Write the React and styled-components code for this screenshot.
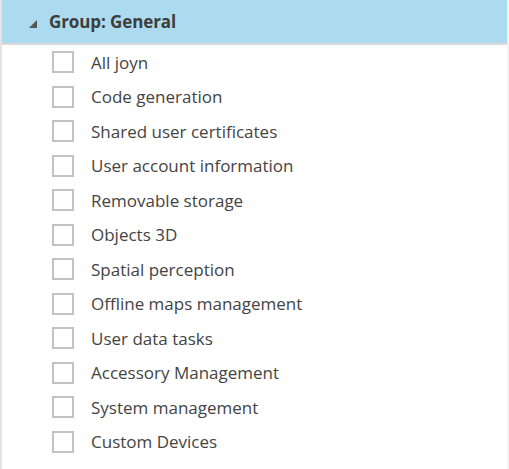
import React from "react";
import styled, { createGlobalStyle } from "styled-components";

const Global = createGlobalStyle`
  html, body { margin: 0; padding: 0; background: #fff; }
  body { font-family: "Open Sans", "Noto Sans", sans-serif; }
`;

const Panel = styled.div`
  width: 509px;
  height: 469px;
  box-sizing: border-box;
  border-left: 2px solid #e3e3e3;
  border-right: 2px solid #f2f2f2;
  background: #fff;
  overflow: hidden;
`;

const Header = styled.div`
  height: 43px;
  background: #acdaee;
  border-bottom: 2px solid #d9d9d9;
  display: flex;
  align-items: center;
  padding-left: 29px;
  gap: 12px;
  margin-left: -2px;
  margin-right: -2px;
`;

const Caret = styled.svg`
  width: 8px;
  height: 8px;
  margin-top: 4px;
  flex: none;
`;

const Title = styled.span`
  font-size: 17px;
  font-weight: 700;
  color: #3d3d3d;
  letter-spacing: -0.1px;
`;

const List = styled.div`
  display: flex;
  flex-direction: column;
`;

const Row = styled.label`
  height: 34.5px;
  display: flex;
  align-items: center;
  padding-left: 50px;
  gap: 17px;
`;

const Box = styled.span`
  width: 22px;
  height: 22px;
  box-sizing: border-box;
  border: 2px solid #c2c2c2;
  background: #fff;
  flex: none;
`;

const Label = styled.span`
  font-size: 17px;
  color: #444;
`;

const items = [
  "All joyn",
  "Code generation",
  "Shared user certificates",
  "User account information",
  "Removable storage",
  "Objects 3D",
  "Spatial perception",
  "Offline maps management",
  "User data tasks",
  "Accessory Management",
  "System management",
  "Custom Devices",
];

export default function App() {
  return (
    <>
      <Global />
      <Panel>
        <Header>
          <Caret viewBox="0 0 8 8">
            <polygon points="8,0 8,8 0,8" fill="#555" />
          </Caret>
          <Title>Group: General</Title>
        </Header>
        <List>
          {items.map((t) => (
            <Row key={t}>
              <Box />
              <Label>{t}</Label>
            </Row>
          ))}
        </List>
      </Panel>
    </>
  );
}
